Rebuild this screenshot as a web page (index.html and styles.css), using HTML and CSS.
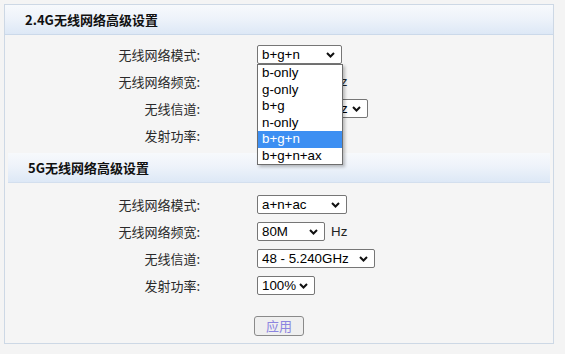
FILE: index.html
```html
<!DOCTYPE html>
<html lang="zh-CN">
<head>
<meta charset="utf-8">
<title>无线网络高级设置</title>
<link rel="stylesheet" href="styles.css">
</head>
<body>
<div class="panel">
  <div class="head head-first">2.4G无线网络高级设置</div>
  <div class="rows rows-first">
    <div class="row">
      <span class="label">无线网络模式:</span>
      <span class="field">
        <span class="sel w-85"><span class="val">b+g+n</span><svg class="chev" width="9" height="6" viewBox="0 0 9 6"><path d="M1 1 L4.5 4.5 L8 1" fill="none" stroke="#111" stroke-width="2"/></svg></span>
        <ul class="menu">
          <li class="opt">b-only</li>
          <li class="opt">g-only</li>
          <li class="opt">b+g</li>
          <li class="opt">n-only</li>
          <li class="opt opt-on">b+g+n</li>
          <li class="opt">b+g+n+ax</li>
        </ul>
      </span>
    </div>
    <div class="row">
      <span class="label">无线网络频宽:</span>
      <span class="field">
        <span class="sel w-68"><span class="val">40M</span><svg class="chev" width="9" height="6" viewBox="0 0 9 6"><path d="M1 1 L4.5 4.5 L8 1" fill="none" stroke="#111" stroke-width="2"/></svg></span>
        <span class="unit">Hz</span>
      </span>
    </div>
    <div class="row">
      <span class="label">无线信道:</span>
      <span class="field">
        <span class="sel w-111"><span class="val">11 - 2.462GHz</span><svg class="chev" width="9" height="6" viewBox="0 0 9 6"><path d="M1 1 L4.5 4.5 L8 1" fill="none" stroke="#111" stroke-width="2"/></svg></span>
      </span>
    </div>
    <div class="row">
      <span class="label">发射功率:</span>
      <span class="field">
        <span class="sel w-58"><span class="val">100%</span><svg class="chev" width="9" height="6" viewBox="0 0 9 6"><path d="M1 1 L4.5 4.5 L8 1" fill="none" stroke="#111" stroke-width="2"/></svg></span>
      </span>
    </div>
  </div>

  <div class="head head-second">5G无线网络高级设置</div>
  <div class="rows rows-second">
    <div class="row">
      <span class="label">无线网络模式:</span>
      <span class="field">
        <span class="sel w-90"><span class="val">a+n+ac</span><svg class="chev" width="9" height="6" viewBox="0 0 9 6"><path d="M1 1 L4.5 4.5 L8 1" fill="none" stroke="#111" stroke-width="2"/></svg></span>
      </span>
    </div>
    <div class="row">
      <span class="label">无线网络频宽:</span>
      <span class="field">
        <span class="sel w-68"><span class="val">80M</span><svg class="chev" width="9" height="6" viewBox="0 0 9 6"><path d="M1 1 L4.5 4.5 L8 1" fill="none" stroke="#111" stroke-width="2"/></svg></span>
        <span class="unit">Hz</span>
      </span>
    </div>
    <div class="row">
      <span class="label">无线信道:</span>
      <span class="field">
        <span class="sel w-118"><span class="val">48 - 5.240GHz</span><svg class="chev" width="9" height="6" viewBox="0 0 9 6"><path d="M1 1 L4.5 4.5 L8 1" fill="none" stroke="#111" stroke-width="2"/></svg></span>
      </span>
    </div>
    <div class="row">
      <span class="label">发射功率:</span>
      <span class="field">
        <span class="sel w-58"><span class="val">100%</span><svg class="chev" width="9" height="6" viewBox="0 0 9 6"><path d="M1 1 L4.5 4.5 L8 1" fill="none" stroke="#111" stroke-width="2"/></svg></span>
      </span>
    </div>
  </div>

  <div class="actions">
    <button class="btn" type="button">应用</button>
  </div>
</div>
</body>
</html>
```

FILE: styles.css
```css
* { box-sizing: border-box; }

html, body {
  margin: 0;
  background: #f4f4f4;
}

body {
  padding: 4px;
  font-family: "Noto Sans CJK SC", "Liberation Sans", sans-serif;
  font-size: 13px;
  color: #222;
}

.panel {
  width: 550px;
  height: 340px;
  border: 1px solid #cdd8e5;
  background: #f5f5f5;
  display: flex;
  flex-direction: column;
}

.head {
  height: 30px;
  display: flex;
  align-items: center;
  font-weight: bold;
  font-size: 13px;
  color: #111;
  background: linear-gradient(to bottom, #f7f9fc 0%, #eef3fa 45%, #dde8f6 100%);
  border-bottom: 1px solid #cbd9ea;
}

.head-first {
  padding-left: 20px;
}

.head-second {
  margin: 4px 3px 0;
  padding-left: 20px;
  border-bottom-color: #d3dfee;
}

.rows {
  display: flex;
  flex-direction: column;
}

.rows-first { margin-top: 6px; }
.rows-second { margin-top: 8px; }

.row {
  height: 27px;
  display: grid;
  grid-template-columns: 195px auto;
  column-gap: 57px;
  align-items: center;
}

.label {
  text-align: right;
  color: #2a2a2a;
  line-height: 19px;
}

.field {
  position: relative;
  display: flex;
  align-items: center;
}

.sel {
  height: 19px;
  display: inline-flex;
  align-items: center;
  justify-content: space-between;
  padding: 0 6px 0 4px;
  background: #fff;
  border: 1px solid #767676;
  border-radius: 2px;
  font-family: "Liberation Sans", Arial, sans-serif;
  font-size: 13.33px;
  color: #000;
  white-space: nowrap;
  overflow: hidden;
}

.chev { flex: none; }

.w-58 { width: 58px; }
.w-68 { width: 68px; }
.w-85 { width: 85px; }
.w-90 { width: 90px; }
.w-111 { width: 111px; }
.w-118 { width: 118px; }

.unit {
  margin-left: 6px;
  font-family: "Liberation Sans", Arial, sans-serif;
  font-size: 13.33px;
  color: #222;
}

.menu {
  position: absolute;
  top: 19px;
  left: 0;
  z-index: 5;
  width: 86px;
  margin: 0;
  padding: 0;
  list-style: none;
  background: #fff;
  border: 1px solid #6e6e6e;
  box-shadow: 2px 2px 3px rgba(0, 0, 0, 0.25);
  font-family: "Liberation Sans", Arial, sans-serif;
  font-size: 13.33px;
  color: #000;
}

.opt {
  height: 16.5px;
  line-height: 16.5px;
  padding-left: 4px;
  white-space: nowrap;
}

.opt-on {
  background: #3d8ff2;
  color: #fff;
}

.actions {
  display: flex;
  justify-content: center;
  margin-top: 17px;
}

.btn {
  width: 50px;
  height: 20px;
  padding: 0;
  background: #efefef;
  border: 1px solid #8a8a8a;
  border-radius: 3px;
  font-family: "Noto Sans CJK SC", sans-serif;
  font-size: 13px;
  line-height: 18px;
  color: #8c84e0;
}
```
